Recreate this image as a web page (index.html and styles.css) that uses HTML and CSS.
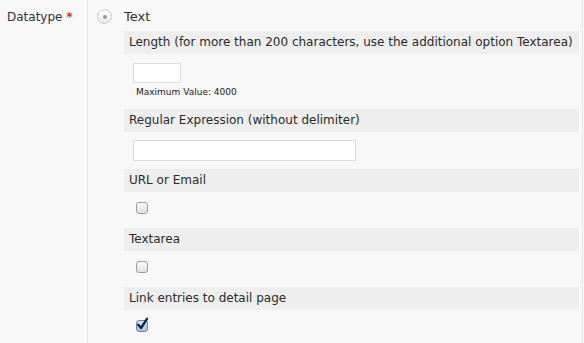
FILE: index.html
```html
<!DOCTYPE html>
<html lang="en">
<head>
<title>Datatype</title>
<meta charset="UTF-8">
<link rel="stylesheet" href="styles.css">
</head>
<body>

<div class="field-row">
  <div class="field-label">Datatype <span class="req">*</span></div>
  <div class="field-value">
    <label class="radio-line">
      <span class="radio"><span class="radio-dot"></span></span>
      <span class="radio-text">Text</span>
    </label>

    <div class="options">
      <div class="opt-head">Length (for more than 200 characters, use the additional option Textarea)</div>
      <div class="opt-body body-length">
        <input type="text" class="input-small">
        <div class="hint">Maximum Value: 4000</div>
      </div>

      <div class="opt-head">Regular Expression (without delimiter)</div>
      <div class="opt-body body-regex">
        <input type="text" class="input-wide">
      </div>

      <div class="opt-head">URL or Email</div>
      <div class="opt-body">
        <span class="check"></span>
      </div>

      <div class="opt-head">Textarea</div>
      <div class="opt-body">
        <span class="check"></span>
      </div>

      <div class="opt-head">Link entries to detail page</div>
      <div class="opt-body">
        <span class="check checked">
          <svg width="13" height="14" viewBox="0 0 13 14"><path d="M2.2 7.8 L5 11 L11 1.8" fill="none" stroke="#142440" stroke-width="2.3" stroke-linecap="round" stroke-linejoin="round"/></svg>
        </span>
      </div>
    </div>
  </div>
</div>

</body>
</html>
```

FILE: styles.css
```css
body {
  margin: 0;
  font-family: "DejaVu Sans", Verdana, sans-serif;
  font-size: 12px;
  color: #333;
  background: #f8f8f8;
}

.field-row {
  display: flex;
  height: 343px;
  overflow: hidden;
}

.field-label {
  flex: none;
  width: 80px;
  padding: 9px 0 0 7px;
  border-right: 1px solid #e6e6e6;
  line-height: 16px;
  white-space: nowrap;
}

.req {
  color: #e8261c;
  font-weight: bold;
}

.field-value {
  flex: 1;
  padding: 0 3px 0 9px;
  border-right: 1px solid #e4e4e4;
  margin-right: 1px;
}

.radio-line {
  display: flex;
  align-items: center;
  height: 31px;
  padding-top: 2px;
  box-sizing: border-box;
}

.radio {
  flex: none;
  width: 13px;
  height: 13px;
  border: 1px solid #cacaca;
  border-radius: 50%;
  background: linear-gradient(#fdfdfd, #ebebeb);
  display: flex;
  align-items: center;
  justify-content: center;
  margin-right: 12px;
}

.radio-dot {
  width: 4px;
  height: 4px;
  border-radius: 50%;
  background: #999;
}

.radio-text {
  font-size: 13px;
  line-height: 16px;
}

.options {
  margin-left: 27px;
}

.opt-head {
  background: #eeeeee;
  height: 23px;
  line-height: 23px;
  padding-left: 5px;
  white-space: nowrap;
  color: #2b2b2b;
}

.opt-body {
  background: #f8f8f8;
  padding: 8px 9px 0;
  height: 36px;
  box-sizing: border-box;
}

.body-length {
  height: 55px;
  padding-top: 9px;
}

.body-regex {
  height: 37px;
}

.input-small {
  display: block;
  width: 48px;
  height: 20px;
  box-sizing: border-box;
  border: 1px solid #dcdcdc;
  background: #fff;
  margin: 0;
}

.input-wide {
  display: block;
  width: 223px;
  height: 21px;
  box-sizing: border-box;
  border: 1px solid #dcdcdc;
  background: #fff;
  margin: 0;
}

.hint {
  font-size: 9px;
  color: #222;
  padding: 4px 0 0 3px;
}

.check {
  display: block;
  width: 10px;
  height: 10px;
  margin: 2px 0 0 3px;
  border: 1px solid #9d9d9d;
  border-radius: 3px;
  background: linear-gradient(#fafafa, #e0e0e0);
  position: relative;
}

.check.checked {
  background: linear-gradient(#d3e3f8, #9fbfe8);
  border-color: #6d86a8;
}

.check svg {
  position: absolute;
  left: -1px;
  top: -4px;
}
```
